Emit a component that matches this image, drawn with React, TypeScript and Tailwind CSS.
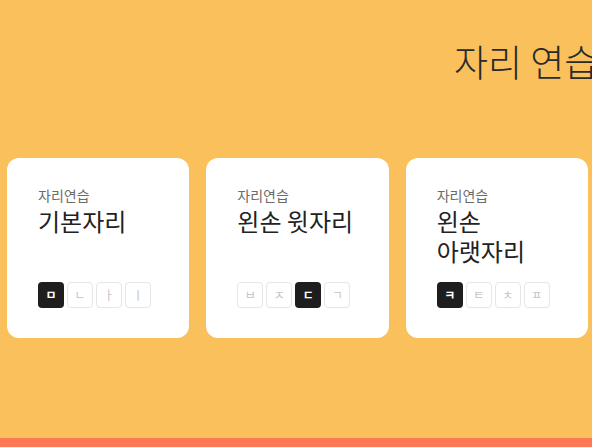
import React from "react";

type Card = { title: string[]; keys: string[]; active: number };

const cards: Card[] = [
  { title: ["기본자리"], keys: ["ㅁ", "ㄴ", "ㅏ", "ㅣ"], active: 0 },
  { title: ["왼손 윗자리"], keys: ["ㅂ", "ㅈ", "ㄷ", "ㄱ"], active: 2 },
  { title: ["왼손", "아랫자리"], keys: ["ㅋ", "ㅌ", "ㅊ", "ㅍ"], active: 0 },
];

export default function App() {
  return (
    <div
      className="w-[592px] h-[447px] bg-[#f9c05c] overflow-hidden flex flex-col"
      style={{ fontFamily: '"Noto Sans CJK KR", "Noto Sans", sans-serif' }}
    >
      <div className="h-[36px]" />
      <div className="pl-[454px] whitespace-nowrap text-[37px] leading-[50px] font-light text-[#2a2a2a]">
        자리 연습
      </div>
      <div className="h-[72px]" />
      <div className="pl-[7px] w-[588px] grid grid-cols-3 gap-[17px]">
        {cards.map((c, i) => (
          <div
            key={i}
            className="bg-white rounded-[12px] h-[180px] flex flex-col pl-[31px] pt-[27px] pb-[30px]"
          >
            <div className="text-[14px] leading-[20px] text-[#6b6b6b]">자리연습</div>
            <div className="text-[24px] leading-[30px] text-[#222222] mt-[1px]">
              {c.title.map((t, j) => (
                <div key={j}>{t}</div>
              ))}
            </div>
            <div className="mt-auto flex gap-[3px]">
              {c.keys.map((k, j) => (
                <div
                  key={j}
                  className={
                    j === c.active
                      ? "w-[26px] h-[26px] rounded-[4px] bg-[#1e1e1e] text-white flex items-center justify-center text-[12px] font-bold"
                      : "w-[26px] h-[26px] rounded-[4px] border border-[#e6e6e6] text-[#c4c4c4] flex items-center justify-center text-[12px]"
                  }
                >
                  {k}
                </div>
              ))}
            </div>
          </div>
        ))}
      </div>
      <div className="mt-auto h-[9px] bg-[#fc7857]" />
    </div>
  );
}
